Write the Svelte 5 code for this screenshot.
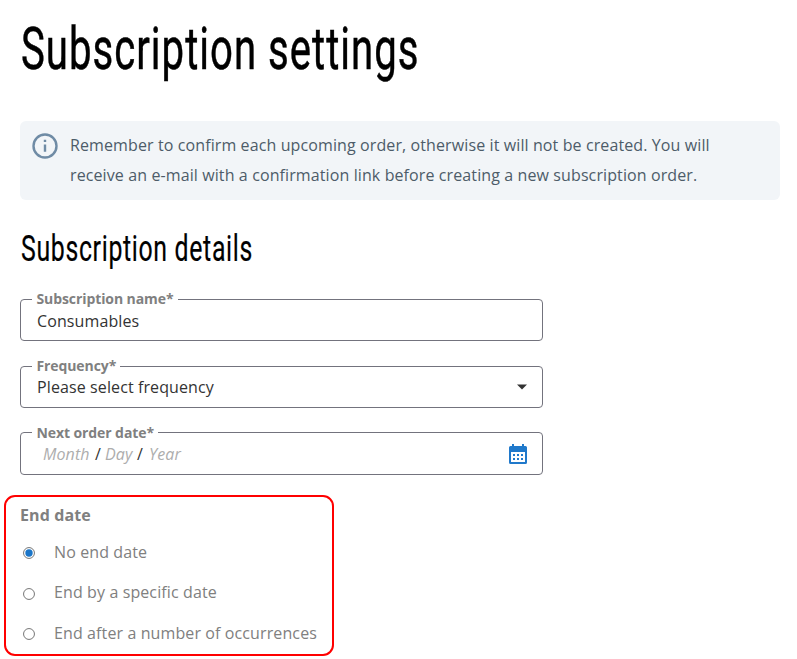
<script>
  let name = $state('Consumables');
  let end = $state(0);
  const options = ['No end date', 'End by a specific date', 'End after a number of occurrences'];
</script>

<main>
  <h1>
    <svg width="600" height="100" viewBox="0 0 600 100">
      <text x="0" y="69" textLength="398.500" lengthAdjust="spacingAndGlyphs">Subscription settings</text>
    </svg>
  </h1>

  <div class="notice">
    <svg width="26" height="26" viewBox="0 0 26 26">
      <circle cx="13" cy="13" r="11.500" fill="none" stroke="#6f8ba5" stroke-width="2.400" />
      <path d="M11.800 6.800h2.400v2.200h-2.400zM11.800 11.400h2.400v7.400h-2.400z" fill="#6f8ba5" />
    </svg>
    <p>
      <span>Remember to confirm each upcoming order, otherwise it will not be created. You will</span><br />
      <span>receive an e-mail with a confirmation link before creating a new subscription order.</span>
    </p>
  </div>

  <h2>
    <svg width="400" height="50" viewBox="0 0 400 50">
      <text x="0" y="34" textLength="232" lengthAdjust="spacingAndGlyphs">Subscription details</text>
    </svg>
  </h2>

  <fieldset class="field">
    <legend>Subscription name*</legend>
    <div class="value">{name}</div>
  </fieldset>

  <fieldset class="field select">
    <legend>Frequency*</legend>
    <div class="value">
      <span>Please select frequency</span>
      <svg class="arrow" width="10" height="6" viewBox="0 0 10 6"><path d="M0 0.500h10L5 5.500z" fill="#333" /></svg>
    </div>
  </fieldset>

  <fieldset class="field date">
    <legend><span>Next order date*</span></legend>
    <div class="value">
      <span class="parts"><i class="m">Month</i><b>/</b><i class="d">Day</i><b>/</b><i class="y">Year</i></span>
      <svg class="calendar" width="18" height="20" viewBox="0 0 18 20">
        <path fill="#2079cb" fill-rule="evenodd" d="M3 0h2v2h8V0h2v2h1.500q1.500 0 1.500 1.500v15q0 1.500-1.500 1.500h-15q-1.500 0-1.500-1.500v-15q0-1.500 1.500-1.500H3zM2 8v10h14V8z" />
        <path fill="#2079cb" d="M4 10h2v2H4zM8 10h2v2H8zM12 10h2v2h-2zM4 14h2v2H4zM8 14h2v2H8zM12 14h2v2h-2z" />
      </svg>
    </div>
  </fieldset>

  <section class="end">
    <h3>End date</h3>
    {#each options as option, i}
      <button type="button" class="option" onclick={() => (end = i)}>
        <svg width="12" height="12" viewBox="0 0 12 12">
          <circle cx="6" cy="6" r="5.450" fill="#fff" stroke="#767676" stroke-width="1" />
          {#if end === i}<circle cx="6" cy="6" r="3.700" fill="#1a75c8" />{/if}
        </svg>
        <span>{option}</span>
      </button>
    {/each}
  </section>
</main>

<style>
  :global(body) { background: #fff; }
  main {
    box-sizing: border-box;
    width: 797px;
    height: 659px;
    overflow: hidden;
    padding: 0 17px 0 20px;
    font: 16px/22px "Open Sans", "Noto Sans", sans-serif;
    letter-spacing: 0.108px;
    color: #333;
  }
  h1, h2, h3, p { margin: 0; }
  h1 { height: 121px; padding-left: 1px; }
  h1 svg, h2 svg { display: block; overflow: visible; }
  h1 text { font: 400 60px Roboto, sans-serif; letter-spacing: 1.500px; fill: #000; stroke: #000; stroke-width: 0.500; }
  h2 text { font: 400 37px Roboto, sans-serif; letter-spacing: 1px; fill: #000; stroke: #000; stroke-width: 0.200; }
  .notice {
    box-sizing: border-box;
    height: 79px;
    display: flex;
    gap: 12px;
    padding: 9px 12px;
    border-radius: 6px;
    background: #f2f5f8;
    color: #4d5c69;
    line-height: 30px;
    white-space: nowrap;
  }
  .notice svg { flex: none; margin-top: 3px; }
  h2 { height: 50px; margin: 27px 0 13px 1px; }
  .field {
    box-sizing: border-box;
    width: 523px;
    height: 51px;
    margin: 0 0 16px;
    padding: 0 15px 0 16px;
    border: 1px solid #73737d;
    border-radius: 4px;
    min-width: 0;
  }
  .select { margin-bottom: 15px; }
  .date { height: 52px; margin-bottom: 0; }
  legend {
    height: 18px;
    margin-left: -5px;
    padding: 0 4px 0 4.400px;
    font-size: 14px;
    line-height: 18px;
    font-weight: 700;
    letter-spacing: -0.080px;
    color: #808080;
  }
  .date legend { line-height: 20px; }
  .value {
    display: flex;
    justify-content: space-between;
    height: 22px;
    margin-top: 2px;
  }
  .select .value { margin-top: 1px; }
  .arrow { margin-top: 8px; }
  .parts { display: flex; padding-left: 6px; }
  .parts i { color: #adadad; }
  .parts b { font-weight: 400; width: 7px; }
  .m { width: 52px; }
  .d { width: 32px; margin-left: 3px; }
  .y { margin-left: 5px; }
  .calendar { margin-top: 1px; }
  .end {
    box-sizing: border-box;
    width: 330px;
    height: 161px;
    margin: 20px 0 0 -16px;
    padding: 7px 14px 0;
    border: 2px solid #f00;
    border-radius: 11px;
    color: #808080;
  }
  h3 { height: 28px; font-size: 16px; line-height: 22px; font-weight: 700; }
  .option {
    display: flex;
    align-items: center;
    gap: 19px;
    height: 40.400px;
    padding: 0 0 0 3px;
    border: 0;
    background: none;
    font: inherit;
    letter-spacing: 0.110px;
    color: inherit;
    white-space: nowrap;
  }
  .option svg { margin-top: 2px; }
  .option:nth-of-type(2) span { margin-top: -1px; }
</style>
